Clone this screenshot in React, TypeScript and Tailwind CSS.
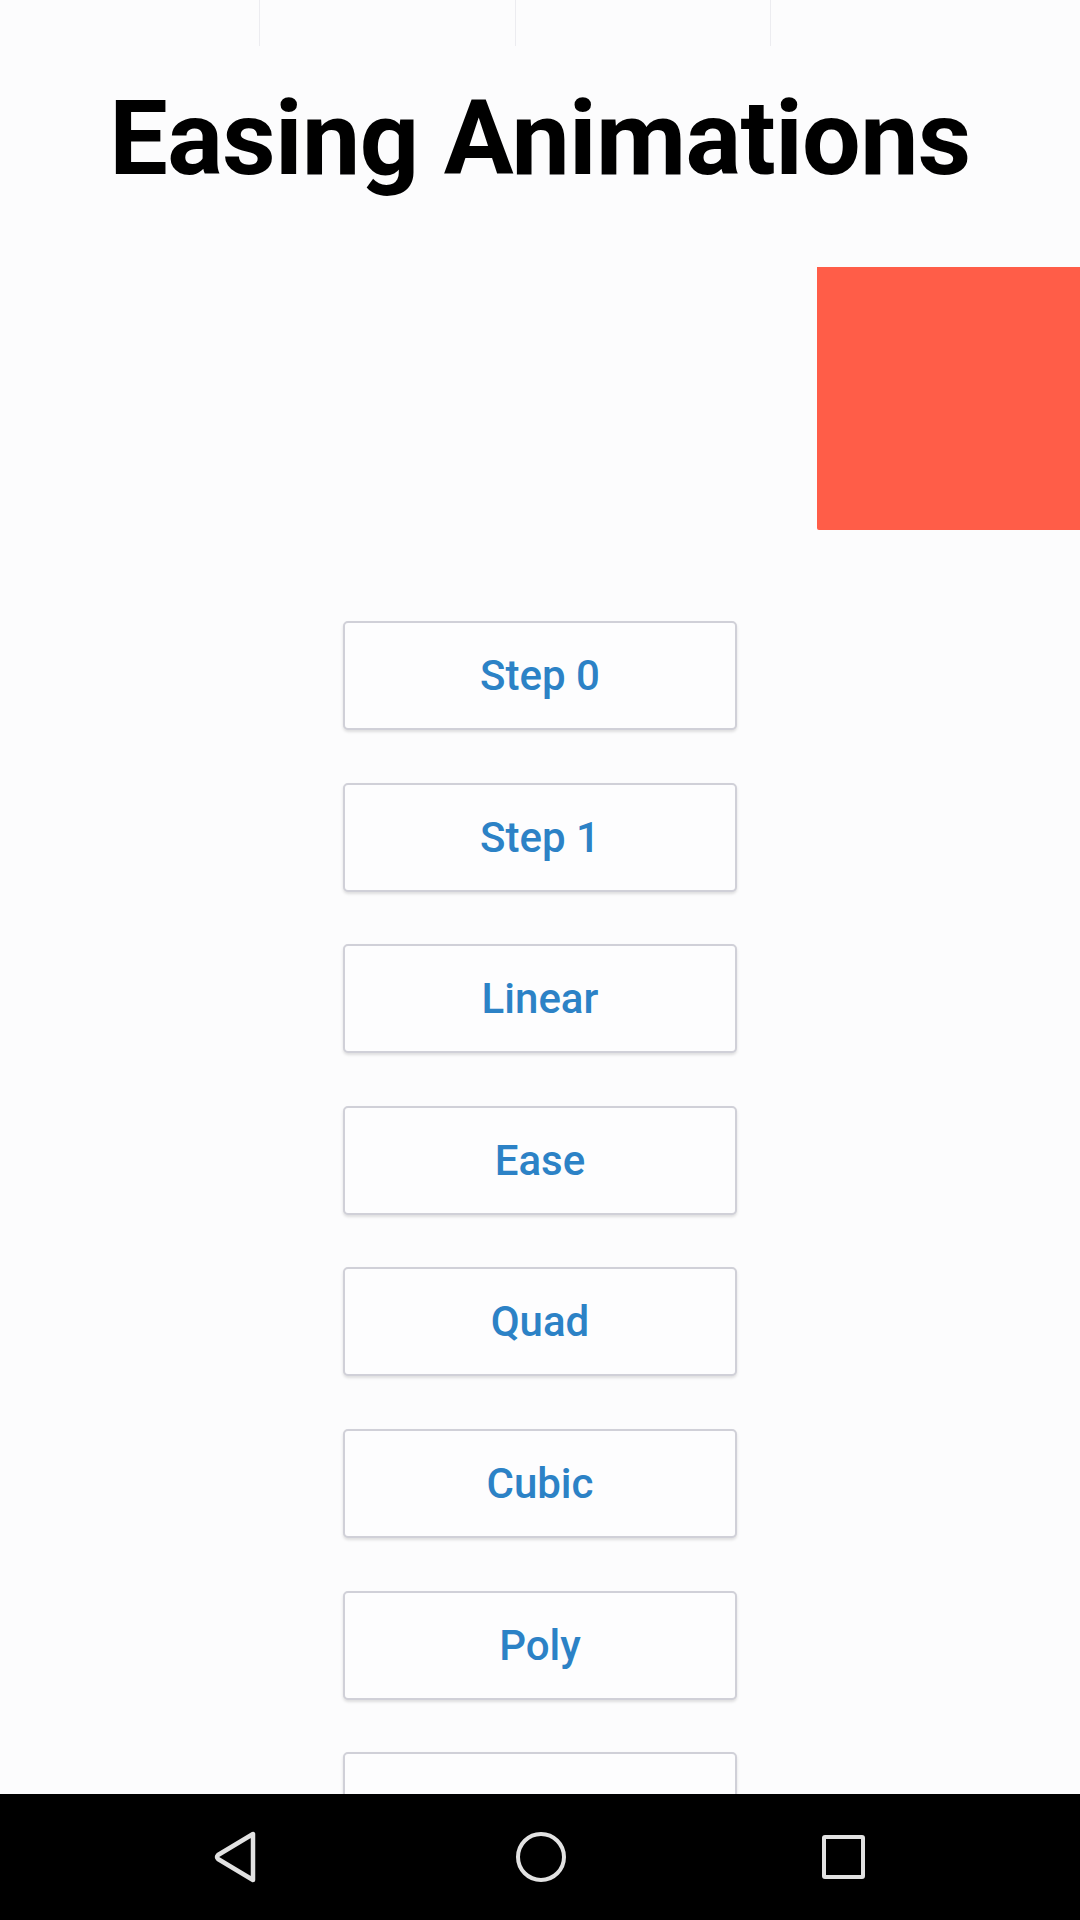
const items = ["Step 0", "Step 1", "Linear", "Ease", "Quad", "Cubic", "Poly", ""];

export default function App() {
  return (
    <div className="w-[1080px] h-[1920px] flex flex-col bg-[#fcfcfd] overflow-hidden font-['Roboto',sans-serif]">
      {/* faint ghost of the status bar */}
      <div className="h-[46px] flex shrink-0">
        <div className="w-[260px] border-r border-[#ececf0]" />
        <div className="w-[256px] border-r border-[#ececf0]" />
        <div className="w-[255px] border-r border-[#ececf0]" />
        <div className="flex-1" />
      </div>

      <div className="flex-1 flex flex-col overflow-hidden">
        <h1 className="mt-[41px] text-center text-[104px] leading-none font-bold text-black tracking-[-0.6px]">
          Easing Animations
        </h1>

        {/* animated box */}
        <div className="mt-[76px] flex justify-end">
          <div className="w-[263px] h-[263px] bg-[#ff5d48] rounded-bl-[2px]" />
        </div>

        <div className="mt-[91px] flex flex-col items-center gap-[52.6px]">
          {items.map((label, i) => (
            <button
              key={i}
              className="w-[394px] h-[109px] shrink-0 rounded-[5px] border-2 border-[#d0d0d8] bg-[#fdfdfe] shadow-[0_2px_3px_rgba(0,0,0,0.12)] text-[42px] font-medium text-[#2c82c6] flex items-center justify-center"
            >
              {label}
            </button>
          ))}
        </div>
      </div>

      {/* android navigation bar */}
      <div className="h-[126px] shrink-0 bg-black flex items-center justify-center">
        <div className="w-full flex items-center">
          <div className="ml-[212px] w-[48px] h-[50px] flex items-center justify-center">
            <svg width="48" height="52" viewBox="0 0 48 52" fill="none">
              <path d="M41 3 L41 49 L6 28 Q4 26 6 24 Z" stroke="#e2e2e2" strokeWidth="4.5" strokeLinejoin="round" />
            </svg>
          </div>
          <div className="ml-[256px] w-[50px] h-[50px] rounded-full border-[4.5px] border-[#e2e2e2]" />
          <div className="ml-[256px] w-[43px] h-[44px] rounded-[3px] border-[4.5px] border-[#e2e2e2]" />
        </div>
      </div>
    </div>
  );
}
